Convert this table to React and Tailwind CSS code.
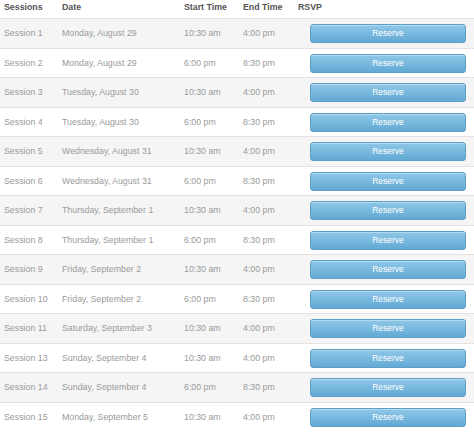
import React from 'react';

const sessions = [
  { name: 'Session 1', date: 'Monday, August 29', start: '10:30 am', end: '4:00 pm' },
  { name: 'Session 2', date: 'Monday, August 29', start: '6:00 pm', end: '8:30 pm' },
  { name: 'Session 3', date: 'Tuesday, August 30', start: '10:30 am', end: '4:00 pm' },
  { name: 'Session 4', date: 'Tuesday, August 30', start: '6:00 pm', end: '8:30 pm' },
  { name: 'Session 5', date: 'Wednesday, August 31', start: '10:30 am', end: '4:00 pm' },
  { name: 'Session 6', date: 'Wednesday, August 31', start: '6:00 pm', end: '8:30 pm' },
  { name: 'Session 7', date: 'Thursday, September 1', start: '10:30 am', end: '4:00 pm' },
  { name: 'Session 8', date: 'Thursday, September 1', start: '6:00 pm', end: '8:30 pm' },
  { name: 'Session 9', date: 'Friday, September 2', start: '10:30 am', end: '4:00 pm' },
  { name: 'Session 10', date: 'Friday, September 2', start: '6:00 pm', end: '8:30 pm' },
  { name: 'Session 11', date: 'Saturday, September 3', start: '10:30 am', end: '4:00 pm' },
  { name: 'Session 13', date: 'Sunday, September 4', start: '10:30 am', end: '4:00 pm' },
  { name: 'Session 14', date: 'Sunday, September 4', start: '6:00 pm', end: '8:30 pm' },
  { name: 'Session 15', date: 'Monday, September 5', start: '10:30 am', end: '4:00 pm' },
];

const cols = 'grid grid-cols-[58px_122px_59px_55px_1fr]';

const App = () => {
  return (
    <div className="w-[474px] h-[433px] overflow-hidden bg-white font-['Liberation_Sans',Arial,sans-serif] text-[8.8px]">
      {/* header */}
      <div className={`${cols} h-[18px] pt-[1px] font-bold text-[#555]`}>
        <div className="pl-[4px]">Sessions</div>
        <div className="pl-[4px]">Date</div>
        <div className="pl-[4px]">Start Time</div>
        <div className="pl-[4px]">End Time</div>
        <div className="pl-[4px]">RSVP</div>
      </div>

      {sessions.map((s, i) => (
        <div
          key={s.name}
          className={`${cols} h-[29.5px] border-t border-[#e2e2e2] text-[#9a9a9a] ${i % 2 === 0 ? 'bg-[#f5f5f5]' : 'bg-white'}`}
        >
          <div className="pl-[4px] pt-[8px]">{s.name}</div>
          <div className="pl-[4px] pt-[8px]">{s.date}</div>
          <div className="pl-[4px] pt-[8px]">{s.start}</div>
          <div className="pl-[4px] pt-[8px]">{s.end}</div>
          <div className="pl-[16px] pr-[8px] pt-[5px]">
            <button className="w-full h-[19px] rounded-[3px] border border-[#5d9dc6] bg-gradient-to-b from-[#8fc8e8] to-[#62a9d4] text-white text-[8.5px] shadow-[inset_0_1px_0_rgba(255,255,255,0.35)]">
              Reserve
            </button>
          </div>
        </div>
      ))}
    </div>
  );
};

export default App;
